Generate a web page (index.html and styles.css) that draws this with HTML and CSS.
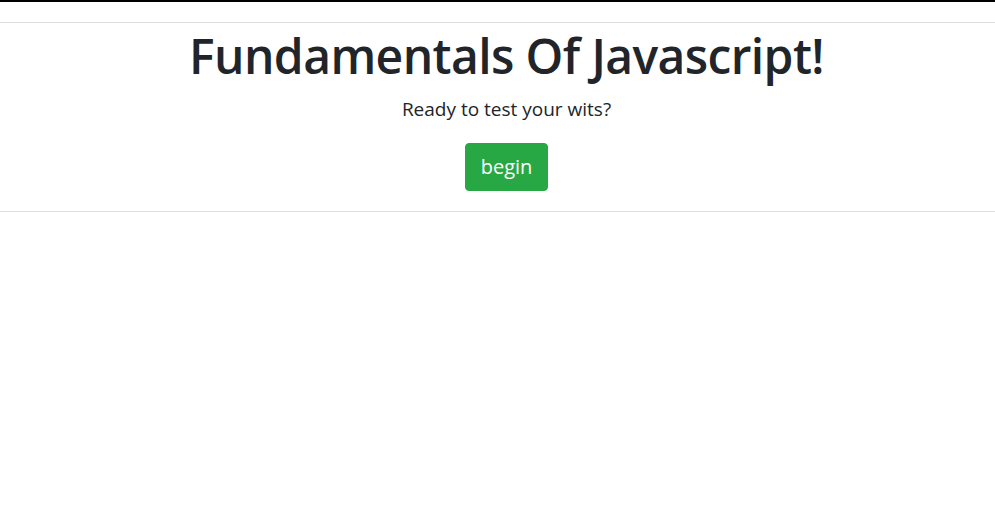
FILE: index.html
```html
<!DOCTYPE html>
<html>
<head>
<meta charset="utf-8">
<link rel="stylesheet" href="styles.css">
</head>
<body>
<div class="topbar"></div>
<main class="intro">
  <h1 class="title">Fundamentals Of Javascript!</h1>
  <p class="lead">Ready to test your wits?</p>
  <button class="btn-begin">begin</button>
</main>
</body>
</html>
```
FILE: styles.css
```css
html, body {
  margin: 0;
  padding: 0;
  background: #fff;
}
body {
  font-family: "Open Sans", "Noto Sans", sans-serif;
  color: #212529;
}
.topbar {
  height: 2px;
  background: #000;
  margin-bottom: 20px;
}
.intro {
  border-top: 1px solid #dedede;
  border-bottom: 1px solid #dedede;
  display: flex;
  flex-direction: column;
  align-items: center;
  padding: 4px 0 20px 18px;
}
.title {
  margin: 0;
  font-size: 48px;
  font-weight: 600;
  line-height: 1.2;
  letter-spacing: -0.6px;
}
.lead {
  margin: 10px 0 0;
  font-size: 19px;
  line-height: 1.5;
}
.btn-begin {
  margin-top: 20px;
  font-family: inherit;
  font-size: 20px;
  line-height: 1.5;
  padding: 8px 15px;
  color: #fff;
  background: #28a745;
  border: 1px solid #28a745;
  border-radius: 4px;
}
```
